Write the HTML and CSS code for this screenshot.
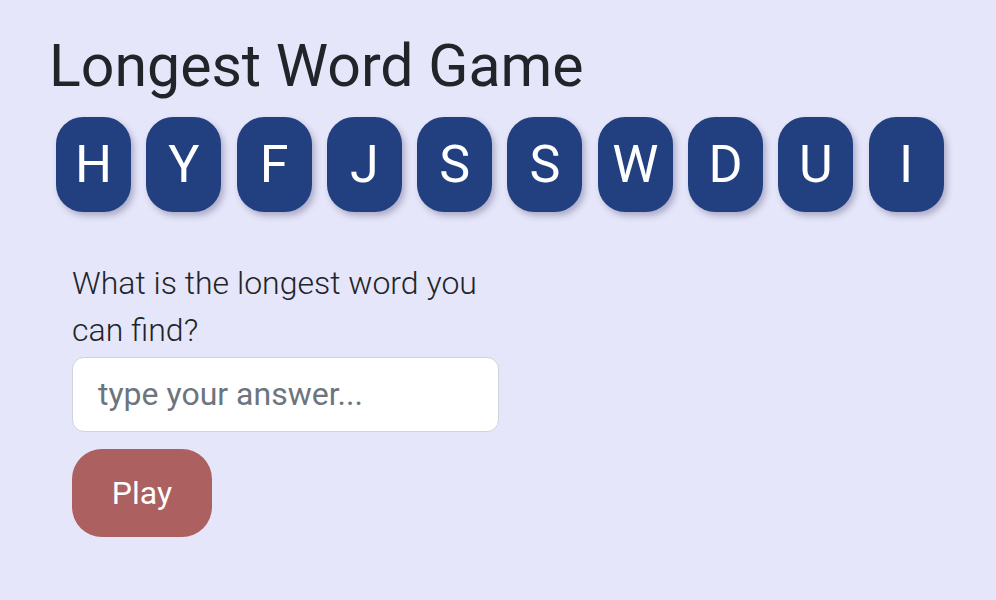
FILE: index.html
```html
<!DOCTYPE html>
<html lang="en">
<head>
<meta charset="utf-8">
<title>Longest Word Game</title>
<link rel="stylesheet" href="styles.css">
</head>
<body>
<main class="page">
  <h1 class="title">Longest Word Game</h1>
  <div class="tiles">
    <div class="tile">H</div>
    <div class="tile">Y</div>
    <div class="tile">F</div>
    <div class="tile">J</div>
    <div class="tile">S</div>
    <div class="tile">S</div>
    <div class="tile">W</div>
    <div class="tile">D</div>
    <div class="tile">U</div>
    <div class="tile">I</div>
  </div>
  <form class="answer-form">
    <label class="prompt" for="answer">What is the longest word you can find?</label>
    <input class="answer-input" id="answer" type="text" placeholder="type your answer...">
    <button class="play-btn" type="button">Play</button>
  </form>
</main>
</body>
</html>
```

FILE: styles.css
```css
html, body {
  margin: 0;
  padding: 0;
  background: #e6e6fa;
  height: 100%;
}

body {
  font-family: Roboto, "Liberation Sans", sans-serif;
  color: #212529;
}

.page {
  padding: 30px 0 0 49px;
}

.title {
  margin: 0;
  font-size: 59px;
  font-weight: 400;
  line-height: 72px;
  color: #212529;
}

.tiles {
  display: flex;
  gap: 15.3px;
  margin-top: 15px;
  padding-left: 7px;
}

.tile {
  width: 75px;
  height: 95px;
  border-radius: 27px;
  background: #22407f;
  color: #ffffff;
  font-size: 52px;
  font-weight: 400;
  display: flex;
  align-items: center;
  justify-content: center;
  box-shadow: 3px 4px 6px rgba(40, 40, 90, 0.3);
}

.answer-form {
  display: flex;
  flex-direction: column;
  align-items: flex-start;
  width: 428px;
  margin-top: 48px;
  padding-left: 23px;
}

.prompt {
  font-size: 32px;
  font-weight: 300;
  line-height: 47.4px;
  color: #212529;
}

.answer-input {
  box-sizing: border-box;
  width: 427px;
  height: 75px;
  margin-top: 2px;
  padding: 0 25px;
  border: 1.5px solid #ced4da;
  border-radius: 12px;
  background: #ffffff;
  font-family: Roboto, "Liberation Sans", sans-serif;
  font-size: 32px;
  color: #212529;
  outline: none;
}

.answer-input::placeholder {
  color: #6c757d;
}

.play-btn {
  margin-top: 17px;
  width: 140px;
  height: 88px;
  border: none;
  border-radius: 30px;
  background: #ac6060;
  color: #ffffff;
  font-family: Roboto, "Liberation Sans", sans-serif;
  font-size: 32px;
  font-weight: 400;
  cursor: pointer;
}
```
